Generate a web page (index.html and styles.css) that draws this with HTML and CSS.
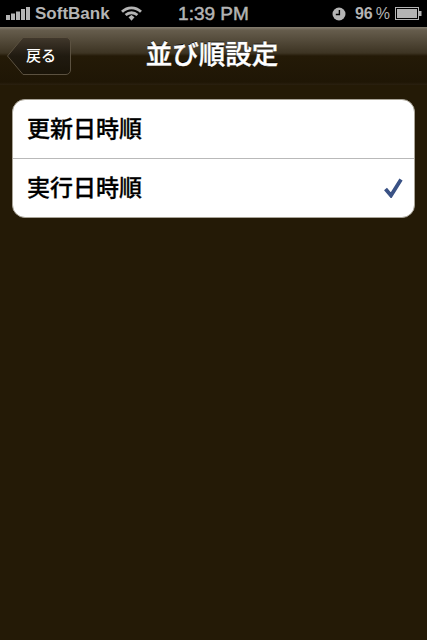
FILE: index.html
```html
<!DOCTYPE html>
<html lang="ja">
<head>
<meta charset="utf-8">
<title>並び順設定</title>
<link rel="stylesheet" href="styles.css">
</head>
<body>
<div class="status">
  <div class="status-left">
    <svg class="signal" width="25" height="13" viewBox="0 0 25 13"><rect x="0" y="8" width="4" height="5"/><rect x="5" y="6.500" width="4" height="6.500"/><rect x="10" y="4.500" width="4" height="8.500"/><rect x="15" y="2" width="4" height="11"/><rect x="20" y="0" width="4" height="13"/></svg>
    <span class="carrier">SoftBank</span>
    <svg class="wifi" width="21" height="15" viewBox="0 0 21 15"><path d="M1 5.800C6.500 .5 14.500 .5 20 5.800" fill="none" stroke="#b4b4b4" stroke-width="2.800"/><path d="M4.600 9c3.400-3 8.400-3 11.800 0" fill="none" stroke="#b4b4b4" stroke-width="2.800"/><path d="M7.500 11.200l3-2.200 3 2.200-3 3.500z" fill="#b4b4b4"/></svg>
  </div>
  <div class="clock">1:39 PM</div>
  <div class="status-right">
    <svg class="alarm" width="14" height="14" viewBox="0 0 14 14"><circle cx="7" cy="7" r="6.500" fill="#b4b4b4"/><path d="M7.400 3v4.500H3.800" fill="none" stroke="#000" stroke-width="1.400"/></svg>
    <span class="percent">96<span class="percent-sign">%</span></span>
    <svg class="battery" width="27" height="13" viewBox="0 0 27 13"><rect x=".5" y=".5" width="23" height="12" fill="none" stroke="#b4b4b4"/><rect x="2" y="2" width="20" height="9" fill="#b4b4b4"/><rect x="24" y="4" width="2.500" height="5" fill="#b4b4b4"/></svg>
  </div>
</div>
<header class="navbar">
  <button class="back">
    <svg class="back-shape" width="66" height="40" viewBox="0 0 66 40"><path d="M1.500 20 17 1.500h43a4.500 4.500 0 0 1 4.500 4.500v28a4.500 4.500 0 0 1-4.500 4.500H17z" fill="url(#bg)" stroke="#5b5140" stroke-width="1"/><defs><linearGradient id="bg" x1="0" y1="0" x2="0" y2="1"><stop offset="0" stop-color="#41382c"/><stop offset=".5" stop-color="#201a10"/><stop offset="1" stop-color="#1a1408"/></linearGradient></defs></svg>
    <span class="back-label">戻る</span>
  </button>
  <h1 class="title">並び順設定</h1>
</header>
<main class="content">
  <ul class="group">
    <li class="row">更新日時順</li>
    <li class="row row-selected">実行日時順
      <svg class="check" width="19" height="20" viewBox="0 0 19 20"><path d="M1.500 11 7 17.500 17 1.500" fill="none" stroke="#3a5285" stroke-width="3.800"/></svg>
    </li>
  </ul>
</main>
</body>
</html>
```
FILE: styles.css
```css
* { box-sizing: border-box; }
html, body { margin: 0; padding: 0; }
body {
  width: 427px;
  height: 640px;
  overflow: hidden;
  background: #241a06;
  font-family: "Liberation Sans", "Noto Sans CJK JP", sans-serif;
  display: flex;
  flex-direction: column;
}
.status {
  height: 27px;
  background: #000;
  color: #b4b4b4;
  font-size: 17px;
  font-weight: 700;
  display: grid;
  grid-template-columns: 1fr auto 1fr;
  align-items: center;
  padding: 0 5px 0 5px;
}
.status-left, .status-right { display: flex; align-items: center; }
.status-right { justify-content: flex-end; }
.signal { fill: #b4b4b4; margin: 0 4px 0 1px; }
.wifi { margin-left: 11px; }
.percent { margin: 0 5px 0 9px; font-size: 16px; }
.percent-sign { margin-left: 3px; font-weight: 400; }
.clock { font-size: 19px; font-weight: 400; text-align: center; -webkit-text-stroke: .5px #b4b4b4; }
.navbar {
  height: 58px;
  position: relative;
  background: linear-gradient(#857e70 0, #665d4d 3px, #3d3423 26px, #241a07 29px, #1f1605 55px, #2a2010 58px);
  display: flex;
  align-items: center;
  justify-content: center;
  padding: 0 3px 3px 0;
}
.back {
  position: absolute;
  left: 6px;
  top: 9px;
  width: 66px;
  height: 40px;
  padding: 0;
  border: 0;
  background: none;
  color: #fff;
  font: inherit;
}
.back-shape { position: absolute; left: 0; top: 0; }
.back-label {
  position: absolute;
  left: 20px;
  top: 10px;
  font-size: 15px;
  font-weight: 500;
  line-height: 20px;
}
.title {
  margin: 0;
  color: #fff;
  font-size: 26.500px;
  font-weight: 500;
  line-height: 34px;
  -webkit-text-stroke: .4px #fff;
  text-shadow: 0 -1px 0 #000;
}
.content { padding: 14px 12px 0 12px; }
.group {
  list-style: none;
  margin: 0;
  padding: 0;
  background: #fff;
  border: 1px solid #a9a498;
  border-radius: 13px;
  overflow: hidden;
}
.row {
  height: 58px;
  display: flex;
  align-items: center;
  justify-content: space-between;
  padding: 0 11px 5px 14px;
  color: #000;
  font-size: 23px;
  font-weight: 500;
  -webkit-text-stroke: .3px #000;
}
.row-selected {
  height: 59px;
  padding-bottom: 4px;
}
.row + .row { border-top: 1px solid #b9b9b9; }
.check { margin-top: 3px; }
```
